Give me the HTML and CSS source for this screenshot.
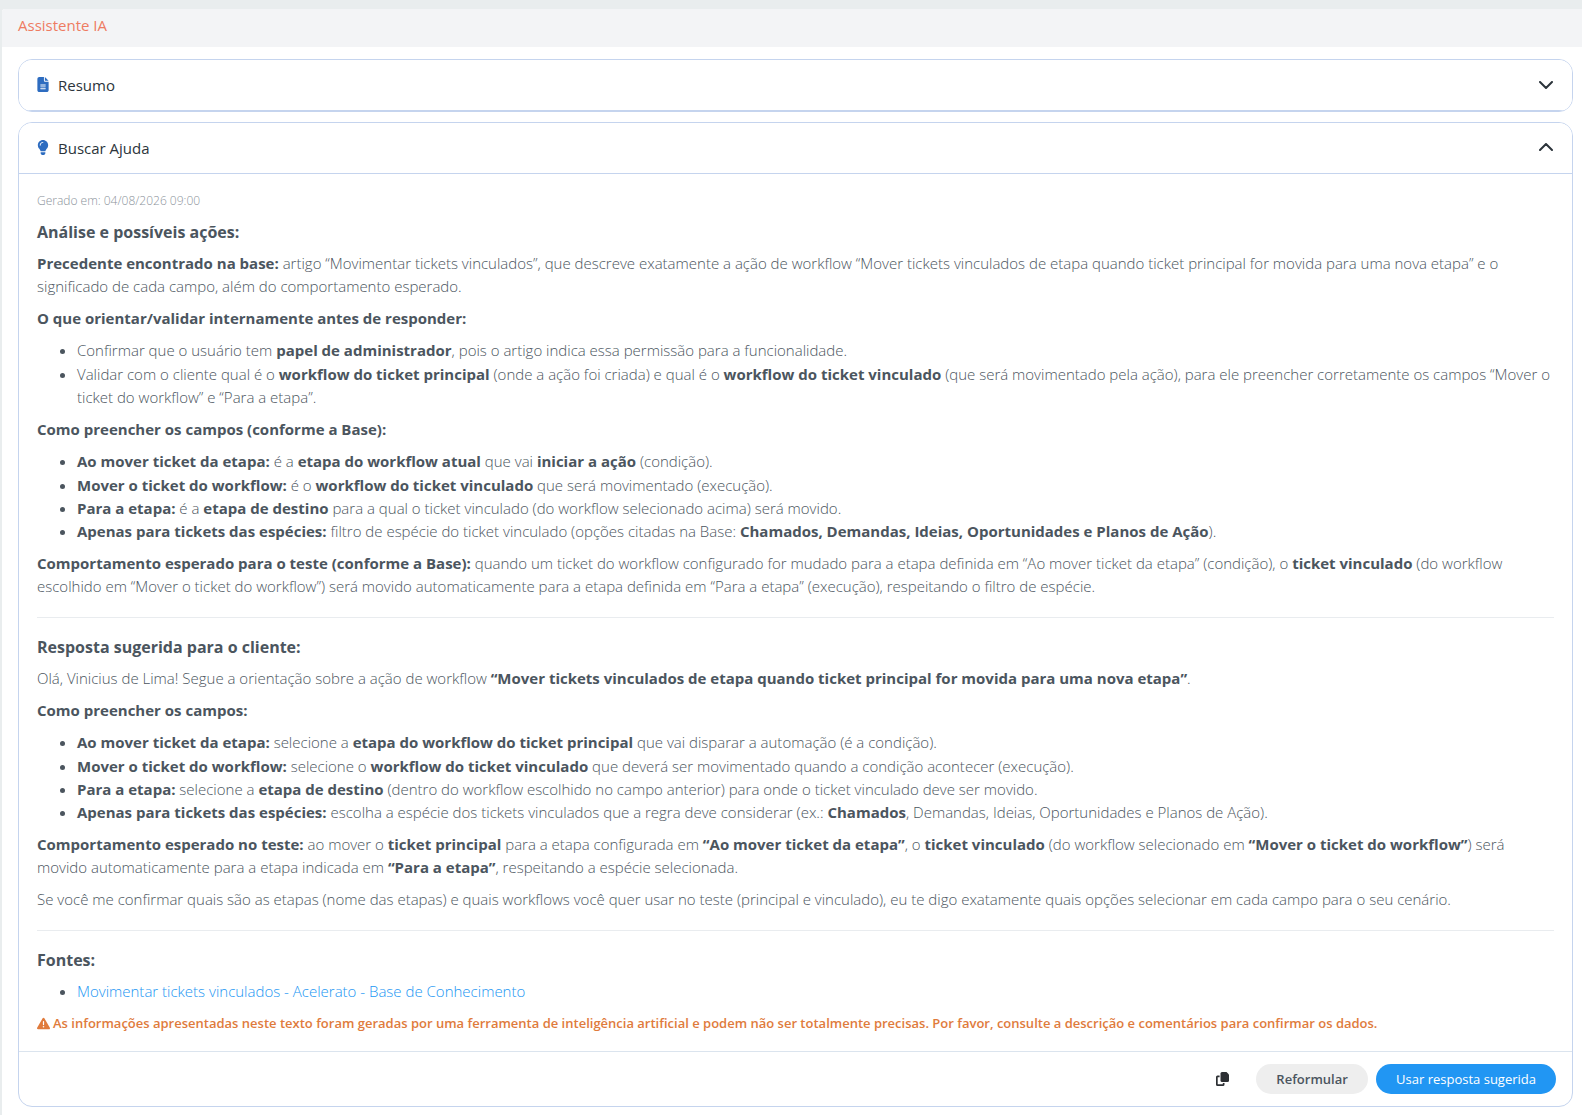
FILE: index.html
```html
<!DOCTYPE html>
<html lang="pt-BR">
    <head>
        <title>Assistente IA</title>
        <meta charset="utf-8">
        <link rel="stylesheet" href="styles.css">
    </head>
    <body>
        <div class="painel">
            <h1 class="titulo">Assistente IA</h1>
            <div class="conteudo">
                <section class="card fechado">
                    <button class="card-topo" type="button" aria-expanded="false">
                        <svg class="icone" viewBox="0 0 384 512"><path d="M64 0C29 0 0 29 0 64v384c0 35 29 64 64 64h256c35 0 64-29 64-64V160H256c-18 0-32-14-32-32V0H64zm192 0v128h128L256 0zM112 256h160c9 0 16 7 16 16s-7 16-16 16H112c-9 0-16-7-16-16s7-16 16-16zm0 64h160c9 0 16 7 16 16s-7 16-16 16H112c-9 0-16-7-16-16s7-16 16-16zm0 64h160c9 0 16 7 16 16s-7 16-16 16H112c-9 0-16-7-16-16s7-16 16-16z" fill-rule="evenodd"/></svg>
                        <span>Resumo</span>
                        <svg class="seta" viewBox="0 0 14 8"><path d="M1 1l6 6 6-6"/></svg>
                    </button>
                </section>
                <section class="card">
                    <button class="card-topo" type="button" aria-expanded="true">
                        <svg class="icone" viewBox="0 0 384 512"><path d="M112 454c0 6 2 12 5 17l17 26c6 9 16 15 27 15h62c11 0 21-6 27-15l17-26c3-5 5-11 5-17v-38H112v38zM16 176c0 44 16 85 43 116 17 19 43 59 53 92h160c10-33 36-73 53-92 27-31 43-72 43-116C368 79 289 0 192 0 90 0 16 83 16 176zm176-80c-44 0-80 36-80 80 0 9-7 16-16 16s-16-7-16-16c0-62 50-112 112-112 9 0 16 7 16 16s-7 16-16 16z"/></svg>
                        <span>Buscar Ajuda</span>
                        <svg class="seta seta-cima" viewBox="0 0 14 8"><path d="M1 7l6-6 6 6"/></svg>
                    </button>
                    <div class="texto">
                        <p class="data">Gerado em: 04/08/2026 09:00</p>
                        <h2>Análise e possíveis ações:</h2>
                        <p><strong>Precedente encontrado na base:</strong> artigo “Movimentar tickets vinculados”, que descreve exatamente a ação de workflow “Mover tickets vinculados de etapa quando ticket principal for movida para uma nova etapa” e o significado de cada campo, além do comportamento esperado.</p>
                        <p><strong>O que orientar/validar internamente antes de responder:</strong></p>
                        <ul>
                            <li>Confirmar que o usuário tem <strong>papel de administrador</strong>, pois o artigo indica essa permissão para a funcionalidade.</li>
                            <li>Validar com o cliente qual é o <strong>workflow do ticket principal</strong> (onde a ação foi criada) e qual é o <strong>workflow do ticket vinculado</strong> (que será movimentado pela ação), para ele preencher corretamente os campos “Mover o ticket do workflow” e “Para a etapa”.</li>
                        </ul>
                        <p><strong>Como preencher os campos (conforme a Base):</strong></p>
                        <ul>
                            <li><strong>Ao mover ticket da etapa:</strong> é a <strong>etapa do workflow atual</strong> que vai <strong>iniciar a ação</strong> (condição).</li>
                            <li><strong>Mover o ticket do workflow:</strong> é o <strong>workflow do ticket vinculado</strong> que será movimentado (execução).</li>
                            <li><strong>Para a etapa:</strong> é a <strong>etapa de destino</strong> para a qual o ticket vinculado (do workflow selecionado acima) será movido.</li>
                            <li><strong>Apenas para tickets das espécies:</strong> filtro de espécie do ticket vinculado (opções citadas na Base: <strong>Chamados, Demandas, Ideias, Oportunidades e Planos de Ação</strong>).</li>
                        </ul>
                        <p><strong>Comportamento esperado para o teste (conforme a Base):</strong> quando um ticket do workflow configurado for mudado para a etapa definida em “Ao mover ticket da etapa” (condição), o <strong>ticket vinculado</strong> (do workflow escolhido em “Mover o ticket do workflow”) será movido automaticamente para a etapa definida em “Para a etapa” (execução), respeitando o filtro de espécie.</p>
                        <hr>
                        <h2>Resposta sugerida para o cliente:</h2>
                        <p>Olá, Vinicius de Lima! Segue a orientação sobre a ação de workflow <strong>“Mover tickets vinculados de etapa quando ticket principal for movida para uma nova etapa”</strong>.</p>
                        <p><strong>Como preencher os campos:</strong></p>
                        <ul>
                            <li><strong>Ao mover ticket da etapa:</strong> selecione a <strong>etapa do workflow do ticket principal</strong> que vai disparar a automação (é a condição).</li>
                            <li><strong>Mover o ticket do workflow:</strong> selecione o <strong>workflow do ticket vinculado</strong> que deverá ser movimentado quando a condição acontecer (execução).</li>
                            <li><strong>Para a etapa:</strong> selecione a <strong>etapa de destino</strong> (dentro do workflow escolhido no campo anterior) para onde o ticket vinculado deve ser movido.</li>
                            <li><strong>Apenas para tickets das espécies:</strong> escolha a espécie dos tickets vinculados que a regra deve considerar (ex.: <strong>Chamados</strong>, Demandas, Ideias, Oportunidades e Planos de Ação).</li>
                        </ul>
                        <p><strong>Comportamento esperado no teste:</strong> ao mover o <strong>ticket principal</strong> para a etapa configurada em <strong>“Ao mover ticket da etapa”</strong>, o <strong>ticket vinculado</strong> (do workflow selecionado em <strong>“Mover o ticket do workflow”</strong>) será movido automaticamente para a etapa indicada em <strong>“Para a etapa”</strong>, respeitando a espécie selecionada.</p>
                        <p>Se você me confirmar quais são as etapas (nome das etapas) e quais workflows você quer usar no teste (principal e vinculado), eu te digo exatamente quais opções selecionar em cada campo para o seu cenário.</p>
                        <hr>
                        <h2>Fontes:</h2>
                        <ul>
                            <li><a href="#">Movimentar tickets vinculados - Acelerato - Base de Conhecimento</a></li>
                        </ul>
                        <p class="aviso">
                            <svg viewBox="0 0 512 512"><path d="M256 32c14 0 27 7 35 20l216 368c7 12 7 27 0 40s-20 20-35 20H40c-14 0-28-8-35-20s-7-28 0-40L221 52c8-13 21-20 35-20zm0 128c-13 0-24 11-24 24v112c0 13 11 24 24 24s24-11 24-24V184c0-13-11-24-24-24zm32 224a32 32 0 1 0-64 0 32 32 0 1 0 64 0z" fill-rule="evenodd"/></svg>
                            <span>As informações apresentadas neste texto foram geradas por uma ferramenta de inteligência artificial e podem não ser totalmente precisas. Por favor, consulte a descrição e comentários para confirmar os dados.</span>
                        </p>
                    </div>
                    <div class="rodape">
                        <button class="copiar" type="button" aria-label="Copiar">
                            <svg viewBox="0 0 13 14"><path d="M6 0h4.500L13 2.500V8.500A1.500 1.500 0 0 1 11.500 10H6A1.500 1.500 0 0 1 4.500 8.500v-7A1.500 1.500 0 0 1 6 0z"/><path d="M3.600 3.500H1.500A1.500 1.500 0 0 0 0 5v7.500A1.500 1.500 0 0 0 1.500 14H7a1.500 1.500 0 0 0 1.500-1.500V11H6.800v1.300H1.700V5.200h1.900z"/></svg>
                        </button>
                        <button class="btn" type="button">Reformular</button>
                        <button class="btn btn-azul" type="button">Usar resposta sugerida</button>
                    </div>
                </section>
            </div>
        </div>
    </body>
</html>
```
FILE: styles.css
```css
* {
    box-sizing: border-box;
}
body {
    margin: 0;
    padding: 9px 0 0 2px;
    background-color: #e9edee;
    font-family: "Open Sans", sans-serif;
    font-size: 15px;
    font-weight: 300;
    line-height: 23px;
    color: #4b555e;
}
.painel {
    min-height: calc(100vh - 9px);
    background-color: #fff;
    border-radius: 3px 0 0 0;
}
.titulo {
    margin: 0;
    padding: 5px 16px 10px;
    background-color: #f3f4f6;
    border-radius: 3px 0 0 0;
    font-size: 15px;
    font-weight: 400;
    color: #ee7b62;
}
.conteudo {
    padding: 12px 9px 6px 16px;
}
.card {
    border: 1px solid #c5d4ee;
    border-radius: 14px;
    margin-bottom: 10px;
    overflow: hidden;
}
.card:last-child {
    margin-bottom: 0;
}
.card-topo {
    display: flex;
    align-items: center;
    width: 100%;
    height: 51px;
    padding: 0 19px 0 18px;
    border: 0;
    border-bottom: 1px solid #c5d4ee;
    background-color: #fff;
    font: inherit;
    font-weight: 400;
    color: #2c343b;
    text-align: left;
    cursor: pointer;
}
.icone {
    width: 12px;
    height: 15px;
    margin: 0 9px 2px 0;
    fill: #2d6cc0;
}
.seta {
    width: 14px;
    height: 8px;
    margin-left: auto;
    fill: none;
    stroke: #2c343b;
    stroke-width: 2;
    stroke-linecap: round;
    stroke-linejoin: round;
}
.seta-cima {
    margin-bottom: 3px;
}
.texto {
    padding: 15px 18px 7px;
}
.texto p {
    margin: 0 0 9px;
}
.texto h2 {
    margin: 0 0 8px;
    font-size: 16px;
    line-height: 23px;
    font-weight: 700;
}
.texto .data {
    font-size: 12px;
    color: #8b939b;
}
.texto ul {
    margin: 0 0 9px;
    padding-left: 40px;
}
.texto li:first-child {
    margin-bottom: 1px;
}
.texto strong {
    font-weight: 700;
}
.texto hr {
    margin: 19px 0 18px;
    border: 0;
    border-top: 1px solid #e9ecef;
}
.texto a {
    color: #2196f3;
    text-decoration: none;
}
.texto .aviso {
    display: flex;
    align-items: center;
    font-size: 13px;
    font-weight: 600;
    color: #e07b3c;
}
.aviso svg {
    width: 13px;
    height: 13px;
    margin-right: 3px;
    fill: #e07b3c;
}
.rodape {
    display: flex;
    align-items: center;
    justify-content: flex-end;
    gap: 8px;
    padding: 12px 16px;
    border-top: 1px solid #dbe4ee;
}
.copiar {
    display: flex;
    padding: 0;
    margin-right: 19px;
    border: 0;
    background: none;
    cursor: pointer;
}
.copiar svg {
    width: 13px;
    height: 14px;
    fill: #2c2f33;
}
.btn {
    min-width: 112px;
    height: 30px;
    padding: 0 20px;
    border: 0;
    border-radius: 15px;
    background-color: #eee;
    font-family: inherit;
    font-size: 13px;
    font-weight: 600;
    color: #4b555e;
    cursor: pointer;
}
.btn-azul {
    background-color: #2196f3;
    font-weight: 400;
    color: #fff;
}
```
